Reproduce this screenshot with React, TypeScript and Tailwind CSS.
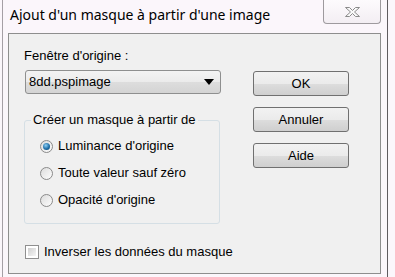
const ui = { fontFamily: '"Liberation Sans", Arial, sans-serif' };
const title = { fontFamily: '"Noto Sans", "Open Sans", sans-serif' };

const Radio = ({ checked, label }: { checked?: boolean; label: string }) => (
  <div className="flex items-center h-[16px]">
    <div className="w-[13px] h-[13px] rounded-full border border-[#8a8a8a] bg-[linear-gradient(135deg,#dcdcdc,#fdfdfd)] flex items-center justify-center">
      {checked && (
        <div className="w-[7px] h-[7px] rounded-full bg-[radial-gradient(circle_at_40%_35%,#8fd0f5,#1f6fa8_55%,#0d3f66)]" />
      )}
    </div>
    <span className="ml-[5px] text-[13px] text-black leading-[16px] whitespace-nowrap">{label}</span>
  </div>
);

const Btn = ({ children }: { children: string }) => (
  <button className="w-[96px] h-[25px] rounded-[3px] border border-[#707070] bg-[linear-gradient(#f2f2f2_0%,#ebebeb_50%,#dddddd_51%,#cfcfcf_100%)] text-[13px] text-black leading-none">
    {children}
  </button>
);

export default function App() {
  return (
    <div className="w-[395px] h-[277px] overflow-hidden bg-[#fbf6fb] flex" style={ui}>
      <div className="ml-[2px] w-[386px] h-full border-l border-[#a59fa5] border-r border-r-[#5f5b5f] flex flex-col">
        {/* title bar */}
        <div className="h-[33px] flex items-start shrink-0">
          <span className="ml-[7px] mt-[5px] text-[14px] text-black leading-[20px]" style={title}>
            Ajout d'un masque à partir d'une image
          </span>
          <div className="ml-auto mr-[6px] w-[58px] h-[24px] rounded-b-[4px] border border-t-0 border-[#9e9a9e] bg-[linear-gradient(#fdfbfd,#f3eef3)] flex items-center justify-center">
            <svg width="17" height="12" viewBox="0 0 17 12">
              <path
                d="M1.5 1.5h4l3 3 3-3h4l-5 4.5 5 4.5h-4l-3-3-3 3h-4l5-4.5z"
                fill="#fafafa"
                stroke="#8a8a8a"
                strokeWidth="1"
                strokeLinejoin="round"
              />
            </svg>
          </div>
        </div>
        {/* panel */}
        <div className="ml-[5px] w-[373px] h-[241px] border border-[#8e8e8e] bg-[#f0f0f0] flex pl-[15px]">
          <div className="flex flex-col w-[196px]">
            <span className="mt-[14px] text-[13px] leading-[16px] text-black">Fenêtre d'origine :</span>
            <div className="mt-[6px] ml-[1px] h-[24px] w-[196px] rounded-[3px] border border-[#8e8f8f] bg-[linear-gradient(#f3f3f3_0%,#ebebeb_50%,#dddddd_51%,#d4d4d4_100%)] flex items-center pl-[3px] pr-[6px]">
              <span className="text-[13px] text-black">8dd.pspimage</span>
              <svg className="ml-auto" width="10" height="6" viewBox="0 0 10 6">
                <path d="M0 0h10L5 6z" fill="#000" />
              </svg>
            </div>
            <fieldset className="mt-[18px] h-[112px] border border-[#d5dfe5] rounded-[3px] p-0">
              <legend className="ml-[6px] px-[2px] text-[13px] leading-[16px] text-black">Créer un masque à partir de</legend>
              <div className="pl-[15px] pt-[10px] flex flex-col gap-[11px]">
                <Radio checked label="Luminance d'origine" />
                <Radio label="Toute valeur sauf zéro" />
                <Radio label="Opacité d'origine" />
              </div>
            </fieldset>
            <div className="mt-[20px] ml-[1px] flex items-center">
              <div className="w-[14px] h-[14px] shrink-0 border border-[#8f8f8f] bg-white p-[2px]">
                <div className="w-full h-full bg-[linear-gradient(135deg,#cfcfcf,#f6f6f6)]" />
              </div>
              <span className="ml-[5px] text-[13px] text-black leading-[16px] whitespace-nowrap">Inverser les données du masque</span>
            </div>
          </div>
          <div className="ml-[33px] mt-[37px] flex flex-col gap-[11px]">
            <Btn>OK</Btn>
            <Btn>Annuler</Btn>
            <Btn>Aide</Btn>
          </div>
        </div>
      </div>
    </div>
  );
}
